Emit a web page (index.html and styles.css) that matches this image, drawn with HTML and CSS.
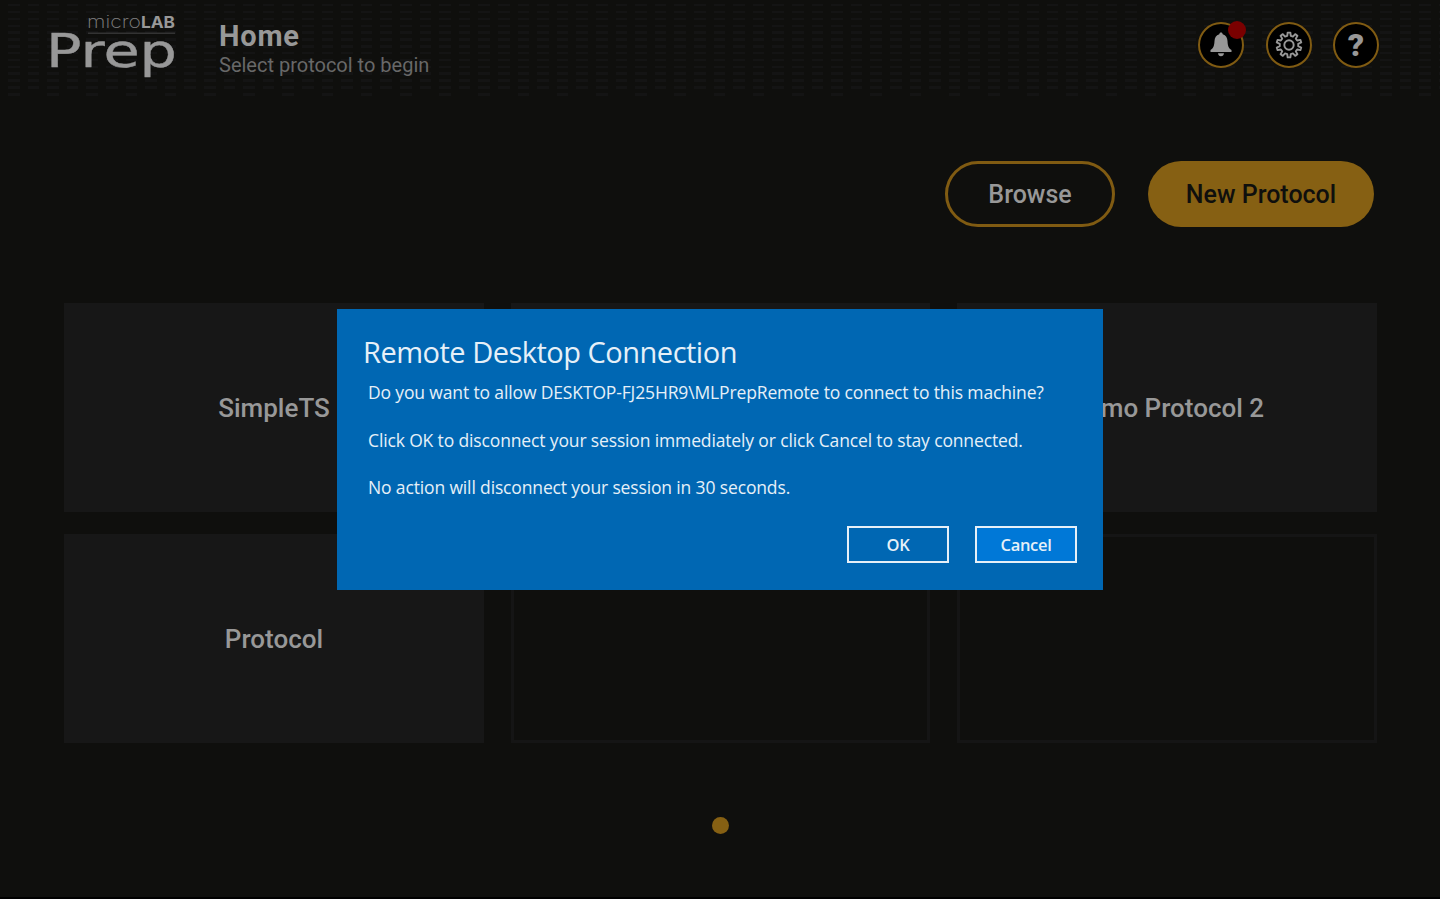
FILE: index.html
```html
<!DOCTYPE html>
<html lang="en">
<head>
  <meta charset="UTF-8" />
  <meta name="viewport" content="width=device-width, initial-scale=1.0" />
  <title>microLAB Prep</title>
  <link rel="stylesheet" href="styles.css">
</head>
<body>
  <div class="app">
    <header class="header">
      <svg class="logo" width="130" height="70" viewBox="0 0 130 70">
        <text class="logo-micro" x="39" y="17" textLength="54" lengthAdjust="spacingAndGlyphs">micro</text>
        <text class="logo-lab" x="93" y="17" textLength="34" lengthAdjust="spacingAndGlyphs">LAB</text>
        <rect class="logo-line" x="40" y="21.500" width="87" height="1.500" />
        <text class="logo-prep" x="-2" y="56" textLength="131" lengthAdjust="spacingAndGlyphs">Prep</text>
      </svg>

      <div class="title">
        <h1>Home</h1>
        <p>Select protocol to begin</p>
      </div>

      <div class="actions">
        <button class="icon-btn">
          <svg width="24" height="26" viewBox="0 0 24 26">
            <path fill="#989898" d="M12 0.500c1 0 1.500.7 1.700 1.700 3.300.8 4.600 3.500 4.800 6.800.2 4.500.9 7 4 9v2h-21v-2c3.100-2 3.800-4.500 4-9 .2-3.300 1.500-6 4.800-6.800.2-1 .7-1.700 1.700-1.700zM9 21.200h6c-.2 2-1.300 3-3 3s-2.800-1-3-3z" />
          </svg>
          <span class="badge"></span>
        </button>
        <button class="icon-btn">
          <svg id="gear" width="30" height="30" viewBox="-15 -15 30 30" fill="none" stroke="#989898" stroke-width="1.900" stroke-linejoin="round">
            <path d="" />
            <circle r="4.700" />
          </svg>
        </button>
        <button class="icon-btn help">?</button>
      </div>
    </header>

    <div class="toolbar">
      <button class="pill outline">Browse</button>
      <button class="pill filled">New Protocol</button>
    </div>

    <main class="grid">
      <div class="card">SimpleTS</div>
      <div class="card"></div>
      <div class="card">Demo Protocol 2</div>
      <div class="card">Protocol</div>
      <div class="card empty"></div>
      <div class="card empty"></div>
    </main>

    <div class="pager"><span class="dot"></span></div>
  </div>

  <div class="dialog">
    <h2>Remote Desktop Connection</h2>
    <p>Do you want to allow DESKTOP-FJ25HR9\MLPrepRemote to connect to this machine?</p>
    <p>Click OK to disconnect your session immediately or click Cancel to stay connected.</p>
    <p>No action will disconnect your session in 30 seconds.</p>
    <div class="dialog-buttons">
      <button>OK</button>
      <button class="active">Cancel</button>
    </div>
  </div>

  <script>
    // gear outline, 10 teeth
    const teeth = 10;
    const pts = [];
    for (let i = 0; i < teeth; i++) {
      const a = (i / teeth) * Math.PI * 2 - Math.PI / 2;
      [[-0.19, 9.3], [-0.11, 12.5], [0.11, 12.5], [0.19, 9.3]].forEach(([da, r]) => {
        pts.push((Math.cos(a + da) * r).toFixed(2) + " " + (Math.sin(a + da) * r).toFixed(2));
      });
    }
    document.querySelector("#gear path").setAttribute("d", "M" + pts.join("L") + "Z");
  </script>
</body>
</html>
```
FILE: styles.css
```css
* {
  box-sizing: border-box;
  margin: 0;
  padding: 0;
}

body {
  background-color: #0f0f0d;
  font-family: Roboto, sans-serif;
  color: #989898;
  height: 899px;
  overflow: hidden;
  border-bottom: 2px solid #000;
}

button {
  font-family: inherit;
  color: inherit;
  cursor: pointer;
}

/* dashed texture, the last row keeps every other dash */
.header {
  display: flex;
  height: 97px;
  padding: 11px 61px 0 48px;
  background:
    repeating-linear-gradient(to right, transparent 0 24px, #0f0f0d 24px 39.2px) 0 100% / 100% 6px no-repeat,
    repeating-linear-gradient(to right, #0f0f0d 0 8px, transparent 8px 19.6px),
    repeating-linear-gradient(to bottom, #0f0f0d 0 4px, #141414 4px 6.5px, #0f0f0d 6.5px 6.85px);
}

.logo {
  display: block;
  overflow: visible;
}

.logo text {
  fill: #989898;
  font-family: "DejaVu Sans", sans-serif;
}

.logo .logo-micro {
  font-family: Inter, sans-serif;
  font-weight: 200;
  font-size: 17px;
  fill: #808080;
}

.logo .logo-lab {
  font-family: Inter, sans-serif;
  font-weight: 700;
  font-size: 16px;
}

.logo .logo-prep {
  font-size: 46px;
  stroke: #989898;
  stroke-width: 0.4px;
}

.logo-line {
  fill: #333;
}

.title {
  margin-left: 41px;
  padding-top: 8px;
}

.title h1 {
  font-size: 29px;
  line-height: 34px;
  font-weight: 700;
  letter-spacing: 0.8px;
}

.title p {
  font-size: 20px;
  line-height: 25px;
  color: #686868;
}

.actions {
  display: flex;
  gap: 21.5px;
  margin-left: auto;
  padding-top: 11px;
}

.icon-btn {
  position: relative;
  display: flex;
  align-items: center;
  justify-content: center;
  width: 46px;
  height: 46px;
  border: 2px solid #805b12;
  border-radius: 50%;
  background: #000;
}

.help {
  font-size: 32px;
  font-weight: 900;
}

.badge {
  position: absolute;
  top: -3px;
  right: -4px;
  width: 18px;
  height: 18px;
  border-radius: 50%;
  background: #7a0000;
}

.toolbar {
  display: flex;
  justify-content: flex-end;
  gap: 33px;
  padding: 64px 66px 0 0;
}

.pill {
  height: 66px;
  border-radius: 33px;
  font-size: 25px;
  font-weight: 500;
}

.outline {
  width: 170px;
  border: 3px solid #805b12;
  background: transparent;
}

.filled {
  width: 226px;
  border: none;
  background: #866013;
  color: #0f0f0d;
}

.grid {
  display: grid;
  grid-template-columns: 420px 419px 420px;
  grid-auto-rows: 209px;
  gap: 22px 27px;
  padding: 76px 0 0 64px;
}

.card {
  display: flex;
  align-items: center;
  justify-content: center;
  padding-top: 1px;
  background: #171717;
  font-size: 26px;
  font-weight: 500;
}

.empty {
  background: transparent;
  border: 3px solid #151515;
}

.pager {
  display: flex;
  justify-content: center;
  padding-top: 74px;
}

.dot {
  width: 17px;
  height: 17px;
  border-radius: 50%;
  background: #866013;
}

.dialog {
  position: absolute;
  top: 309px;
  left: 337px;
  width: 766px;
  height: 281px;
  padding: 24px 26px;
  background: #0067b3;
  color: #e6f0f8;
  font-family: "Open Sans", sans-serif;
}

.dialog h2 {
  margin-bottom: 9px;
  font-size: 29px;
  line-height: 38px;
  font-weight: 400;
  letter-spacing: -0.5px;
  white-space: nowrap;
}

.dialog p {
  padding-left: 5px;
  font-size: 17.5px;
  line-height: 24px;
  letter-spacing: -0.14px;
  margin-bottom: 23.7px;
  white-space: nowrap;
}

.dialog-buttons {
  display: flex;
  justify-content: flex-end;
  gap: 26px;
  padding-top: 3px;
}

.dialog-buttons button {
  width: 102px;
  height: 37px;
  border: 2px solid #e6f0f8;
  background: transparent;
  font-size: 16.5px;
  font-weight: 600;
  letter-spacing: -0.3px;
}

.dialog-buttons .active {
  background: #0078d7;
}
```
